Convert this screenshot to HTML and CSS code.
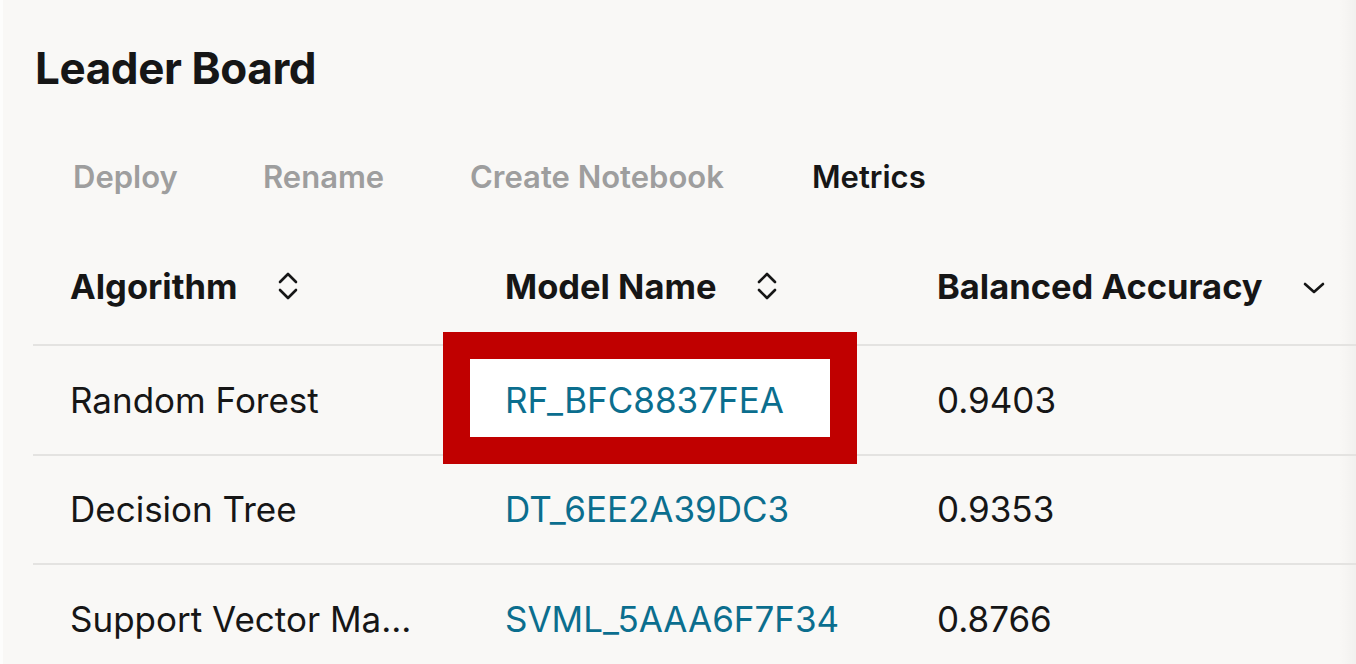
FILE: index.html
```html
<!DOCTYPE html>
<html>
<head>
<meta charset="utf-8">
<link rel="stylesheet" href="styles.css">
</head>
<body>
<div class="page">
  <h1 class="title">Leader Board</h1>
  <div class="tabs">
    <span class="tab muted">Deploy</span>
    <span class="tab muted">Rename</span>
    <span class="tab muted">Create Notebook</span>
    <span class="tab active">Metrics</span>
  </div>
  <div class="table">
    <div class="row head">
      <div class="cell c1"><span>Algorithm</span>
        <svg class="sort" viewBox="0 0 22 30"><path d="M3 11 L11 3 L19 11 M3 19 L11 27 L19 19" fill="none" stroke="#161616" stroke-width="2.6" stroke-linecap="round" stroke-linejoin="round"/></svg>
      </div>
      <div class="cell c2"><span>Model Name</span>
        <svg class="sort" viewBox="0 0 22 30"><path d="M3 11 L11 3 L19 11 M3 19 L11 27 L19 19" fill="none" stroke="#161616" stroke-width="2.6" stroke-linecap="round" stroke-linejoin="round"/></svg>
      </div>
      <div class="cell c3"><span>Balanced Accuracy</span>
        <svg class="down" viewBox="0 0 22 12"><path d="M2 2 L11 10 L20 2" fill="none" stroke="#161616" stroke-width="2.6" stroke-linecap="round" stroke-linejoin="round"/></svg>
      </div>
    </div>
    <div class="row">
      <div class="cell c1">Random Forest</div>
      <div class="cell c2 marked"><span class="highlight"></span><a class="link">RF_BFC8837FEA</a></div>
      <div class="cell c3">0.9403</div>
    </div>
    <div class="row">
      <div class="cell c1">Decision Tree</div>
      <div class="cell c2"><a class="link">DT_6EE2A39DC3</a></div>
      <div class="cell c3">0.9353</div>
    </div>
    <div class="row">
      <div class="cell c1">Support Vector Ma...</div>
      <div class="cell c2"><a class="link">SVML_5AAA6F7F34</a></div>
      <div class="cell c3">0.8766</div>
    </div>
  </div>
</div>
</body>
</html>
```
FILE: styles.css
```css
html, body {
  margin: 0;
  padding: 0;
  height: 100%;
}
body {
  background: #f9f8f6;
  font-family: Inter, "Noto Sans", "Liberation Sans", sans-serif;
  color: #161616;
  overflow: hidden;
}
.page {
  height: 664px;
  padding: 44px 0 0 30px;
  box-sizing: border-box;
  border-left: 3px solid #fdfdfc;
  background: linear-gradient(to right, rgba(0,0,0,0) 1336px, rgba(0,0,0,0.035) 1356px);
}
.title {
  margin: 0 0 0 2px;
  font-size: 44px;
  line-height: 48px;
  font-weight: 700;
  letter-spacing: -0.4px;
  color: #161616;
}
.tabs {
  display: flex;
  margin-top: 65px;
  padding-left: 40px;
  height: 40px;
  align-items: center;
}
.tab {
  font-size: 31px;
  font-weight: 600;
  line-height: 40px;
  white-space: nowrap;
}
.tab.muted { color: #9e9e9e; }
.tab.active { color: #161616; }
.tab:nth-child(1) { width: 190px; }
.tab:nth-child(2) { width: 207px; }
.tab:nth-child(3) { width: 342px; }
.table {
  margin-top: 68px;
  width: 1323px;
}
.row {
  display: flex;
  height: 109.5px;
  border-top: 2px solid #e4e3e1;
  box-sizing: border-box;
}
.row.head {
  border-top: none;
  height: 79px;
}
.cell {
  font-size: 35px;
  line-height: 44px;
  box-sizing: border-box;
  padding-left: 37px;
  display: flex;
  align-items: center;
  white-space: nowrap;
}
.head .cell {
  font-weight: 700;
  font-size: 34.5px;
  align-items: flex-start;
}
.c1 { width: 435px; }
.c2 { width: 432px; }
.c3 { flex: 1; }
.sort {
  width: 22px;
  height: 30px;
  margin-left: 40px;
  margin-top: 6px;
}
.down {
  width: 22px;
  height: 12px;
  margin-left: 40px;
  margin-top: 17px;
}
.link {
  color: #0b6e8e;
  text-decoration: none;
}
.marked {
  position: relative;
}
.highlight {
  position: absolute;
  left: -25px;
  top: -14px;
  width: 414px;
  height: 132px;
  box-sizing: border-box;
  border: 27px solid #c00000;
  background: #ffffff;
}
.marked .link {
  position: relative;
}
```
